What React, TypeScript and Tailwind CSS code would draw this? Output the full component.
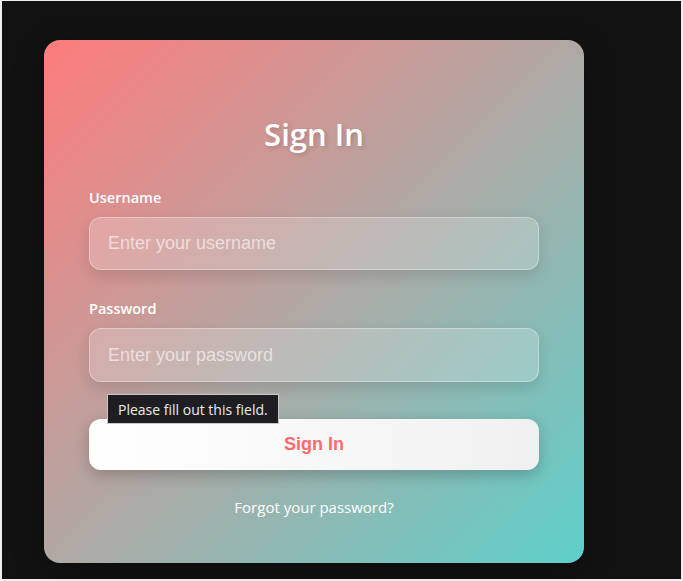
import React from "react";

export default function App() {
  return (
    <div className="w-[683px] h-[581px] bg-[#121212] border-t-[1px] border-l-[2px] border-r-[2px] border-b-[2px] border-[#eeeeee] pl-[42px] pt-[39px] overflow-hidden">
      <div
        className="w-[540px] h-[523px] rounded-[16px] px-[45px] pt-[45px] bg-[linear-gradient(135deg,#ff7c7c_0%,#b0a8a4_50%,#5ed0ca_100%)] shadow-[0_8px_32px_rgba(0,0,0,0.3)]"
        style={{ fontFamily: '"Open Sans", "Noto Sans", sans-serif' }}
      >
        <h2 className="mt-[28px] text-center text-white text-[31px] leading-[42px] font-semibold [text-shadow:2px_2px_4px_rgba(0,0,0,0.15)]">
          Sign In
        </h2>
        <div className="mt-[32px]">
          <label className="block text-white text-[14.5px] leading-[22px] font-semibold">Username</label>
          <input
            placeholder="Enter your username"
            className="mt-[8px] block w-full h-[53px] rounded-[12px] bg-white/20 border border-white/35 px-[18px] text-[18px] text-white placeholder:text-white/60 shadow-[0_6px_14px_rgba(0,0,0,0.12)] outline-none"
            style={{ fontFamily: '"Liberation Sans", Arial, sans-serif' }}
          />
        </div>
        <div className="mt-[28px]">
          <label className="block text-white text-[14.5px] leading-[22px] font-semibold">Password</label>
          <input
            type="password"
            placeholder="Enter your password"
            className="mt-[8px] block w-full h-[54px] rounded-[12px] bg-white/20 border border-white/35 px-[18px] text-[18px] text-white placeholder:text-white/60 shadow-[0_6px_14px_rgba(0,0,0,0.12)] outline-none"
            style={{ fontFamily: '"Liberation Sans", Arial, sans-serif' }}
          />
        </div>
        <div className="relative mt-[37px]">
          <button
            className="block w-full h-[51px] rounded-[12px] bg-[linear-gradient(90deg,#ffffff,#f0f0f0)] text-[#ff6b6b] text-[18px] font-bold shadow-[0_5px_15px_rgba(0,0,0,0.22)]"
            style={{ fontFamily: '"Liberation Sans", Arial, sans-serif' }}
          >
            Sign In
          </button>
          <div className="absolute left-[18px] top-[-25px] h-[30px] px-[10px] flex items-center bg-[#1e1e22] border border-[#c8c8c8] text-[#ececec] text-[14px] whitespace-nowrap">
            Please fill out this field.
          </div>
        </div>
        <div className="mt-[26px] text-center text-white text-[15px] leading-[22px]">Forgot your password?</div>
      </div>
    </div>
  );
}
